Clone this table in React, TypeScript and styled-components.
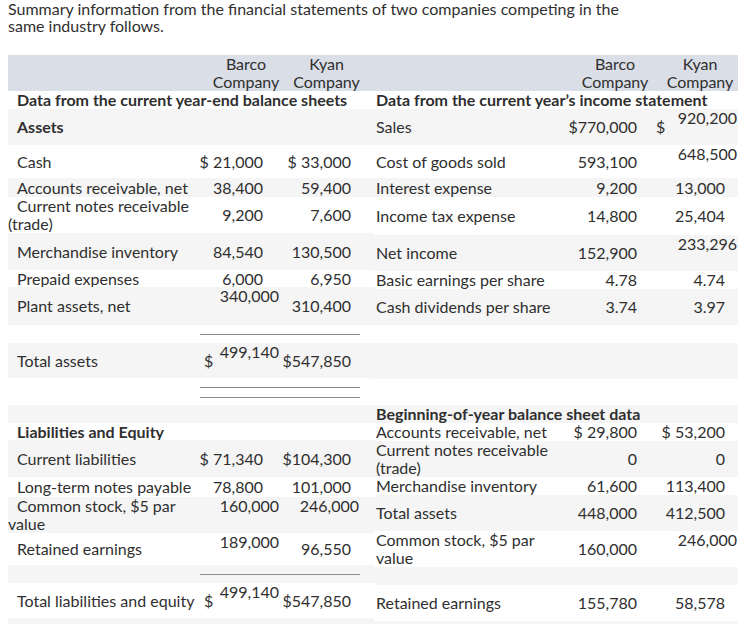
import React from "react";
import styled, { createGlobalStyle } from "styled-components";

const GlobalStyle = createGlobalStyle`
  body {
    margin: 0;
    background: #ffffff;
    font-family: Lato, "Open Sans", sans-serif;
    color: #2f2f2f;
  }
`;

type V = "top" | "middle" | "bottom";

interface Cell {
  t: string;
  v?: V;
  p?: number;
  dollar?: boolean;
}

interface RowData {
  h: number;
  shade: "g" | "w";
  label?: string;
  bold?: boolean;
  title?: boolean;
  lv?: V;
  b?: Cell;
  k?: Cell;
  rule?: "single" | "double";
}

const Page = styled.div`
  padding: 0 8px;
  width: 730px;
  font-size: 16px;
  line-height: 18px;
`;

const Intro = styled.p`
  margin: 0 0 21px;
  width: 640px;
  font-size: 16px;
  line-height: 17px;
`;

const Tables = styled.div`
  display: grid;
  grid-template-columns: 366px 364px;
`;

const TableBox = styled.div`
  display: flex;
  flex-direction: column;
`;

const HeadRow = styled.div<{ $cols: string }>`
  display: grid;
  grid-template-columns: ${(p) => p.$cols};
  height: 36px;
  background: #d9dee7;
`;

const HeadCell = styled.div<{ $pl?: number; $pr?: number }>`
  text-align: center;
  padding-left: ${(p) => p.$pl ?? 0}px;
  padding-right: ${(p) => p.$pr ?? 0}px;
  line-height: 18px;
`;

const Row = styled.div<{ $cols: string; $h: number; $shade: "g" | "w" }>`
  display: grid;
  grid-template-columns: ${(p) => p.$cols};
  height: ${(p) => p.$h}px;
  background: ${(p) => (p.$shade === "g" ? "#f5f5f5" : "#ffffff")};
`;

const justify = (v?: V) =>
  v === "top" ? "flex-start" : v === "bottom" ? "flex-end" : "center";

const Label = styled.div<{
  $v?: V;
  $bold?: boolean;
  $indent: number;
  $pl: number;
  $pr: number;
}>`
  display: flex;
  flex-direction: column;
  justify-content: ${(p) => justify(p.$v)};
  padding-left: ${(p) => p.$pl}px;
  padding-right: ${(p) => p.$pr}px;
  text-indent: ${(p) => p.$indent}px;
  font-weight: ${(p) => (p.$bold ? 700 : 400)};
  white-space: normal;
`;

const Title = styled.div<{ $pl: number }>`
  grid-column: 1 / -1;
  padding-left: ${(p) => p.$pl}px;
  font-weight: 700;
  white-space: nowrap;
  align-self: center;
`;

const Value = styled.div<{ $v?: V; $pr: number }>`
  display: flex;
  justify-content: flex-end;
  align-items: ${(p) => justify(p.$v)};
  padding-right: ${(p) => p.$pr}px;
  white-space: nowrap;
`;

const Split = styled.div<{ $pr: number; $pl: number }>`
  display: flex;
  justify-content: space-between;
  padding-left: ${(p) => p.$pl}px;
  padding-right: ${(p) => p.$pr}px;
  white-space: nowrap;
`;

const Dollar = styled.span`
  align-self: center;
`;

const TopNum = styled.span`
  align-self: flex-start;
`;

const RuleCell = styled.div<{ $kind: "single" | "double" }>`
  grid-column: 2 / 4;
  margin-right: 14px;
  align-self: ${(p) => (p.$kind === "single" ? "center" : "start")};
  margin-top: ${(p) => (p.$kind === "single" ? 0 : 9)}px;
  height: ${(p) => (p.$kind === "single" ? 0 : 9)}px;
  border-top: 1px solid #8c8c8c;
  border-bottom: ${(p) => (p.$kind === "double" ? "1px solid #8c8c8c" : "none")};
`;

interface TableProps {
  cols: string;
  labelPad: number;
  labelRight: number;
  indent: number;
  titlePad: number;
  headPad: [number, number, number, number];
  dollarPad: number;
  rows: RowData[];
}

const renderCell = (c: Cell | undefined, dollarPad: number) => {
  if (!c) return <div />;
  if (c.dollar) {
    return (
      <Split $pl={dollarPad} $pr={c.p ?? 0}>
        <Dollar>$</Dollar>
        <TopNum>{c.t}</TopNum>
      </Split>
    );
  }
  return (
    <Value $v={c.v} $pr={c.p ?? 0}>
      {c.t}
    </Value>
  );
};

const Table: React.FC<TableProps> = ({
  cols,
  labelPad,
  labelRight,
  indent,
  titlePad,
  headPad,
  dollarPad,
  rows,
}) => (
  <TableBox>
    <HeadRow $cols={cols}>
      <div />
      <HeadCell $pl={headPad[0]} $pr={headPad[1]}>
        Barco
        <br />
        Company
      </HeadCell>
      <HeadCell $pl={headPad[2]} $pr={headPad[3]}>
        Kyan
        <br />
        Company
      </HeadCell>
    </HeadRow>
    {rows.map((r, i) => (
      <Row key={i} $cols={cols} $h={r.h} $shade={r.shade}>
        {r.title ? (
          <Title $pl={titlePad}>{r.label}</Title>
        ) : r.rule ? (
          <>
            <div />
            <RuleCell $kind={r.rule} />
          </>
        ) : (
          <>
            <Label
              $v={r.lv}
              $bold={r.bold}
              $indent={indent}
              $pl={labelPad}
              $pr={labelRight}
            >
              {r.label ?? ""}
            </Label>
            {renderCell(r.b, dollarPad)}
            {renderCell(r.k, dollarPad)}
          </>
        )}
      </Row>
    ))}
  </TableBox>
);

const leftRows: RowData[] = [
  { h: 18, shade: "w", title: true, label: "Data from the current year-end balance sheets" },
  { h: 36, shade: "g", label: "Assets", bold: true },
  { h: 33, shade: "w", label: "Cash", b: { t: "$ 21,000", p: 21 }, k: { t: "$ 33,000", p: 23 } },
  { h: 19, shade: "g", label: "Accounts receivable, net", b: { t: "38,400", p: 21 }, k: { t: "59,400", p: 23 } },
  { h: 36, shade: "w", label: "Current notes receivable (trade)", b: { t: "9,200", p: 21 }, k: { t: "7,600", p: 23 } },
  { h: 37, shade: "g", label: "Merchandise inventory", b: { t: "84,540", p: 21 }, k: { t: "130,500", p: 23 } },
  { h: 17, shade: "w", label: "Prepaid expenses", b: { t: "6,000", p: 21 }, k: { t: "6,950", p: 23 } },
  { h: 38, shade: "g", label: "Plant assets, net", b: { t: "340,000", p: 5, v: "top" }, k: { t: "310,400", p: 23 } },
  { h: 18, shade: "w", rule: "single" },
  { h: 35, shade: "g", label: "Total assets", b: { t: "499,140", p: 5, dollar: true }, k: { t: "$547,850", p: 23 } },
  { h: 27, shade: "w", rule: "double" },
  { h: 18, shade: "g" },
  { h: 17, shade: "w", label: "Liabilities and Equity", bold: true },
  { h: 37, shade: "g", label: "Current liabilities", b: { t: "$ 71,340", p: 21 }, k: { t: "$104,300", p: 23 } },
  { h: 20, shade: "w", label: "Long-term notes payable", b: { t: "78,800", p: 21 }, k: { t: "101,000", p: 23 } },
  { h: 36, shade: "g", label: "Common stock, $5 par value", lv: "top", b: { t: "160,000", p: 5, v: "top" }, k: { t: "246,000", p: 15, v: "top" } },
  { h: 32, shade: "w", label: "Retained earnings", b: { t: "189,000", p: 5, v: "top" }, k: { t: "96,550", p: 23 } },
  { h: 18, shade: "g", rule: "single" },
  { h: 35, shade: "w", label: "Total liabilities and equity", b: { t: "499,140", p: 5, dollar: true }, k: { t: "$547,850", p: 23 } },
  { h: 20, shade: "g" },
];

const rightRows: RowData[] = [
  { h: 18, shade: "w", title: true, label: "Data from the current year\u2019s income statement" },
  { h: 36, shade: "g", label: "Sales", b: { t: "$770,000", p: 17 }, k: { t: "920,200", p: 1, dollar: true } },
  { h: 33, shade: "w", label: "Cost of goods sold", b: { t: "593,100", p: 17 }, k: { t: "648,500", p: 1, v: "top" } },
  { h: 19, shade: "g", label: "Interest expense", b: { t: "9,200", p: 17 }, k: { t: "13,000", p: 13 } },
  { h: 38, shade: "w", label: "Income tax expense", b: { t: "14,800", p: 17 }, k: { t: "25,404", p: 13 } },
  { h: 36, shade: "g", label: "Net income", b: { t: "152,900", p: 17 }, k: { t: "233,296", p: 1, v: "top" } },
  { h: 18, shade: "w", label: "Basic earnings per share", b: { t: "4.78", p: 17 }, k: { t: "4.74", p: 13 } },
  { h: 36, shade: "g", label: "Cash dividends per share", b: { t: "3.74", p: 17 }, k: { t: "3.97", p: 13 } },
  { h: 18, shade: "w" },
  { h: 36, shade: "g" },
  { h: 26, shade: "w" },
  { h: 18, shade: "g", title: true, label: "Beginning-of-year balance sheet data" },
  { h: 18, shade: "w", label: "Accounts receivable, net", b: { t: "$ 29,800", p: 17 }, k: { t: "$ 53,200", p: 13 } },
  { h: 36, shade: "g", label: "Current notes receivable (trade)", b: { t: "0", p: 17 }, k: { t: "0", p: 13 } },
  { h: 18, shade: "w", label: "Merchandise inventory", b: { t: "61,600", p: 17 }, k: { t: "113,400", p: 13 } },
  { h: 36, shade: "g", label: "Total assets", b: { t: "448,000", p: 17 }, k: { t: "412,500", p: 13 } },
  { h: 36, shade: "w", label: "Common stock, $5 par value", b: { t: "160,000", p: 17 }, k: { t: "246,000", p: 1, v: "top" } },
  { h: 18, shade: "g" },
  { h: 36, shade: "w", label: "Retained earnings", b: { t: "155,780", p: 17 }, k: { t: "58,578", p: 13 } },
  { h: 20, shade: "g" },
];

const App: React.FC = () => (
  <>
    <GlobalStyle />
    <Page>
      <Intro>
        Summary information from the financial statements of two companies
        competing in the same industry follows.
      </Intro>
      <Tables>
        <Table
          cols="192px 84px 90px"
          labelPad={0}
          labelRight={0}
          indent={9}
          titlePad={9}
          headPad={[8, 0, 0, 5]}
          dollarPad={4}
          rows={leftRows}
        />
        <Table
          cols="200px 80px 84px"
          labelPad={2}
          labelRight={18}
          indent={0}
          titlePad={2}
          headPad={[2, 0, 8, 0]}
          dollarPad={2}
          rows={rightRows}
        />
      </Tables>
    </Page>
  </>
);

export default App;
